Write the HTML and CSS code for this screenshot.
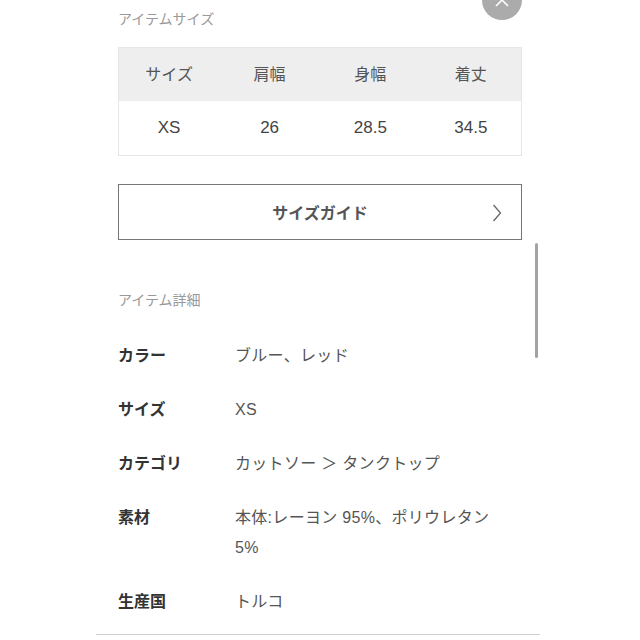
FILE: index.html
```html
<!DOCTYPE html>
<html lang="ja">
<head>
  <meta charset="UTF-8">
  <meta name="viewport" content="width=device-width, initial-scale=1.0">
  <title>アイテム詳細</title>
  <link rel="stylesheet" href="styles.css">
</head>
<body>
  <div class="sheet">
    <button class="close-btn" aria-label="閉じる">
      <svg width="14" height="14" viewBox="0 0 14 14"><path d="M1 1L13 13M13 1L1 13" stroke="#fff" stroke-width="1.6" fill="none"/></svg>
    </button>

    <div class="content">
      <h2 class="section-title">アイテムサイズ</h2>

      <table class="size-table">
        <thead>
          <tr><th>サイズ</th><th>肩幅</th><th>身幅</th><th>着丈</th></tr>
        </thead>
        <tbody>
          <tr><td>XS</td><td>26</td><td>28.5</td><td>34.5</td></tr>
        </tbody>
      </table>

      <button class="guide-btn">
        <span>サイズガイド</span>
        <svg class="chevron" width="10" height="18" viewBox="0 0 10 18"><path d="M1.5 1L8.5 9L1.5 17" stroke="#666" stroke-width="1.3" fill="none"/></svg>
      </button>

      <h2 class="section-title detail-title">アイテム詳細</h2>

      <dl class="details">
        <div class="detail-row"><dt>カラー</dt><dd>ブルー、レッド</dd></div>
        <div class="detail-row"><dt>サイズ</dt><dd>XS</dd></div>
        <div class="detail-row"><dt>カテゴリ</dt><dd>カットソー ＞ タンクトップ</dd></div>
        <div class="detail-row"><dt>素材</dt><dd>本体:レーヨン 95%、ポリウレタン<br>5%</dd></div>
        <div class="detail-row"><dt>生産国</dt><dd>トルコ</dd></div>
      </dl>
    </div>

    <div class="divider"></div>
    <div class="scrollbar"></div>
  </div>
</body>
</html>
```

FILE: styles.css
```css
body {
  margin: 0;
  background: #fff;
  font-family: 'Liberation Sans', 'Noto Sans CJK JP', sans-serif;
  color: #333;
}

.sheet {
  position: relative;
  width: 640px;
  height: 640px;
  overflow: hidden;
}

.content {
  width: 404px;
  margin-left: 118px;
  padding-top: 9px;
}

.section-title {
  margin: 0;
  font-size: 14px;
  line-height: 20px;
  font-weight: normal;
  color: #999;
}

.size-table {
  width: 100%;
  margin-top: 18px;
  border-collapse: collapse;
  table-layout: fixed;
  border: 1px solid #e6e6e6;
}

.size-table th,
.size-table td {
  text-align: center;
  font-size: 16px;
  font-weight: normal;
  color: #444;
}

.size-table th {
  background: #eeeeee;
  height: 50px;
  padding: 0 0 3px;
  color: #555;
}

.size-table td {
  height: 54px;
  padding: 0;
  font-size: 17px;
}

.guide-btn {
  position: relative;
  display: flex;
  align-items: center;
  justify-content: center;
  width: 100%;
  height: 56px;
  margin-top: 28px;
  background: #fff;
  border: 1px solid #777;
  font-family: inherit;
  font-size: 16px;
  font-weight: bold;
  color: #555;
  cursor: pointer;
}

.chevron {
  position: absolute;
  right: 19px;
  top: 19px;
}

.detail-title {
  margin-top: 50px;
}

.details {
  margin: 31px 0 0;
  display: flex;
  flex-direction: column;
  gap: 24px;
}

.detail-row {
  display: grid;
  grid-template-columns: 117px 1fr;
  font-size: 16px;
  line-height: 30px;
}

.detail-row dt {
  font-weight: bold;
  color: #333;
}

.detail-row dd {
  margin: 0;
  color: #555;
  letter-spacing: 0.3px;
}

.divider {
  position: absolute;
  left: 96px;
  top: 634px;
  width: 444px;
  height: 1px;
  background: #cfcfcf;
}

.scrollbar {
  position: absolute;
  left: 535px;
  top: 243px;
  width: 3px;
  height: 115px;
  border-radius: 2px;
  background: #a3a3a3;
}

.close-btn {
  position: absolute;
  left: 482px;
  top: -20px;
  width: 40px;
  height: 40px;
  border: none;
  border-radius: 50%;
  background: #ababab;
  display: flex;
  align-items: center;
  justify-content: center;
  padding: 0;
}
```
